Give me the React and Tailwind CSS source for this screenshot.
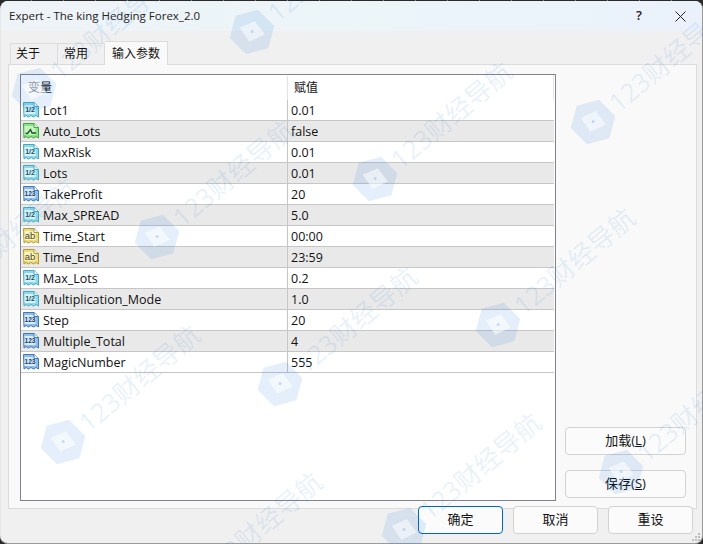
const rows = [
  ['half', 'Lot1', '0.01'],
  ['bool', 'Auto_Lots', 'false'],
  ['half', 'MaxRisk', '0.01'],
  ['half', 'Lots', '0.01'],
  ['int', 'TakeProfit', '20'],
  ['half', 'Max_SPREAD', '5.0'],
  ['str', 'Time_Start', '00:00'],
  ['str', 'Time_End', '23:59'],
  ['half', 'Max_Lots', '0.2'],
  ['half', 'Multiplication_Mode', '1.0'],
  ['int', 'Step', '20'],
  ['int', 'Multiple_Total', '4'],
  ['int', 'MagicNumber', '555'],
];

const iconColors = {
  half: { fill: '#8fd8ea', inner: '#d6f3f8', stroke: '#45a9c6', text: '#14506a', label: '1/2' },
  int: { fill: '#8fbdea', inner: '#dcebfa', stroke: '#3f78b8', text: '#123c70', label: '123' },
  str: { fill: '#eedc7a', inner: '#fbf5c8', stroke: '#b49b30', text: '#4d4208', label: 'ab' },
  bool: { fill: '#8fe088', inner: '#c9f3c4', stroke: '#3fa83f', text: '#0d5a12', label: '' },
};

// value type icon: page with folded corner and a torn bottom edge
const TypeIcon = ({ type }) => {
  const c = iconColors[type];
  return (
    <svg width="16" height="16" viewBox="0 0 16 16" className="shrink-0">
      <path
        d="M0.5 0.500h10.500l4.500 4v10.500l-2.500-1.500-2.500 1.500-2.500-1.500-2.500 1.500-2.500-1.500-2 1.500z"
        fill={c.fill}
        stroke={c.stroke}
      />
      <rect x="1.500" y="3" width="11" height="9" fill={c.inner} />
      <path d="M11 0.500v4h4.500" fill="#f2fbfd" stroke={c.stroke} />
      {type === 'bool' ? (
        <path d="M2.500 10.500h2l3-4 1.500 3.500h4" fill="none" stroke="#0d5a12" strokeWidth="1.300" />
      ) : (
        <text
          x="7"
          y={type === 'str' ? 10.500 : 9.800}
          textAnchor="middle"
          fontSize={type === 'str' ? 9.500 : type === 'int' ? 6.500 : 7}
          fontWeight={type === 'str' ? 400 : 700}
          fontFamily="'Liberation Sans', sans-serif"
          fill={c.text}
        >
          {c.label}
        </text>
      )}
    </svg>
  );
};

const marks = [
  [34, 90], [252, 32], [-61, 295], [157, 237], [375, 179], [593, 122],
  [63, 442], [280, 384], [498, 325], [185, 589], [404, 530], [621, 472],
];

const Watermark = ({ x, y }) => (
  <div
    className="absolute flex items-center gap-[1px] origin-[24px_24px] -rotate-[40deg]"
    style={{ left: x - 24, top: y - 24 }}
  >
    <svg width="48" height="48" viewBox="0 0 48 48" className="rotate-[55deg] shrink-0">
      <path d="M24 1l20 11.500v23L24 47 4 35.500v-23z" fill="#0a6fd8" fillOpacity="0.11" />
      <path d="M24 13l13 10-13 11-13-11z" fill="#ffffff" fillOpacity="0.55" />
      <circle cx="24" cy="23.500" r="1.500" fill="#0a6fd8" fillOpacity="0.2" />
    </svg>
    <span className="text-[26px] leading-none text-[#0a6fd8]/10 whitespace-nowrap">123财经导航</span>
  </div>
);

const DialogButton = ({ label, primary, className = '' }) => (
  <button
    className={`h-[28px] shrink-0 rounded-[4px] bg-[#fbfbfb] text-[13px] text-[#111] border ${primary ? 'border-[#0067c0]' : 'border-[#d2d2d2]'} ${className}`}
  >
    {label}
  </button>
);

const Underlined = ({ text, hot }) => (
  <span>
    {text}(<span className="underline">{hot}</span>)
  </span>
);

export default function App() {
  return (
    <div
      className="relative w-[703px] h-[544px] overflow-hidden bg-[#2a2a2a] text-[#111] pt-px"
      style={{ fontFamily: "'Open Sans', 'Noto Sans CJK SC', sans-serif" }}
    >
      <div className="absolute left-0 top-0 w-full h-px bg-[repeating-linear-gradient(90deg,#2a2a2a_0_31px,#8a8a8a_31px_32px)]" />
      <div className="w-full h-full rounded-[8px] bg-[#f0f0f0] flex flex-col border-r border-b border-[#9a9a9a] border-l border-l-[#e6e6e6] overflow-hidden">
        <div className="h-[30px] shrink-0 flex items-center justify-between bg-gradient-to-r from-[#eef3f7] via-[#ecf5f8] to-[#ebf1fb] pl-[8px] pr-[16px]">
          <span className="text-[11.500px] text-[#222]">Expert - The king Hedging Forex_2.0</span>
          <div className="flex items-center gap-[33px]">
            <span className="text-[13px] font-semibold text-[#222]">?</span>
            <svg width="11" height="11" viewBox="0 0 11 11">
              <path d="M0.500 0.500l10 10M10.500 0.500l-10 10" stroke="#222" strokeWidth="1" fill="none" />
            </svg>
          </div>
        </div>

        <div className="flex items-end h-[33px] pl-[9px] shrink-0 text-[12px]">
          <div className="w-[48px] h-[21px] flex items-center pl-[5px] bg-[#f0f0f0] border border-b-0 border-[#dcdcdc]">关于</div>
          <div className="w-[47px] h-[21px] flex items-center pl-[6px] bg-[#f0f0f0] border border-l-0 border-b-0 border-[#dcdcdc]">常用</div>
          <div className="relative -mb-px w-[63px] h-[24px] flex items-center pl-[7px] bg-[#f9f9f9] border border-l-0 border-b-0 border-[#dcdcdc] z-10">输入参数</div>
        </div>

        <div className="ml-[7px] w-[689px] h-[445px] shrink-0 bg-[#f9f9f9] border border-[#dcdcdc] pl-[11px] pt-[9px] flex">
          <div className="w-[536px] h-[427px] bg-white border border-[#82828f] shrink-0 overflow-hidden pr-px">
            <div className="flex h-[25px] text-[12px]">
              <div className="w-[267px] pl-[7px] mt-[1px] flex items-center border-r border-[#e4e4e4]">变量</div>
              <div className="pl-[6px] mt-[1px] flex items-center">赋值</div>
              <div className="ml-auto w-px h-full bg-[#e4e4e4]" />
            </div>
            {rows.map(([type, name, value], i) => (
              <div
                key={name}
                className={`flex h-[21px] border-b border-[#c6c6c6] text-[12.500px] leading-none ${i % 2 ? 'bg-[#e9e9e9]' : 'bg-white'}`}
              >
                <div className="w-[267px] pl-[2px] flex items-center gap-[4px] border-r border-[#c6c6c6]">
                  <TypeIcon type={type} />
                  <span className="pt-[2px]">{name}</span>
                </div>
                <div className="pl-[3px] pt-[2px] flex items-center">{value}</div>
              </div>
            ))}
          </div>
          <div className="flex flex-col ml-[9px] pt-[353px] gap-[15px] w-[121px] shrink-0">
            <DialogButton label={<Underlined text="加载" hot="L" />} className="w-[121px]" />
            <DialogButton label={<Underlined text="保存" hot="S" />} className="w-[121px]" />
          </div>
        </div>

        <div className="relative -mt-[3px] flex justify-end gap-[10px] pr-[9px]">
          <DialogButton label="确定" primary className="w-[85px]" />
          <DialogButton label="取消" className="w-[85px]" />
          <DialogButton label="重设" className="w-[85px]" />
        </div>
      </div>

      <svg width="10" height="10" viewBox="0 0 10 10" className="absolute right-[2px] bottom-[2px]">
        <path d="M7 1h2v2H7zM4 4h2v2H4zM7 4h2v2H7zM1 7h2v2H1zM4 7h2v2H4zM7 7h2v2H7z" fill="#bdbdbd" />
      </svg>

      <div className="absolute inset-0 pointer-events-none overflow-hidden">
        {marks.map(([x, y]) => (
          <Watermark key={`${x}-${y}`} x={x} y={y} />
        ))}
      </div>
    </div>
  );
}
